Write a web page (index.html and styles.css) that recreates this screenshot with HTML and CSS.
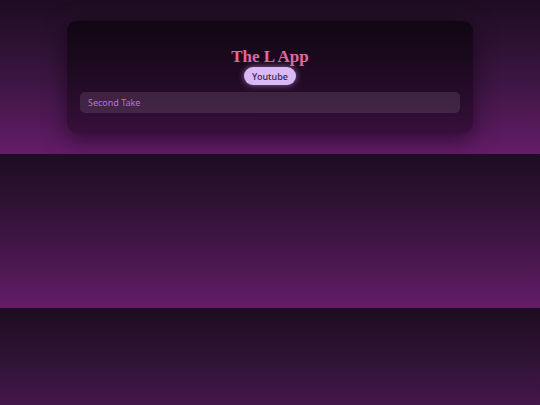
FILE: index.html
```html
<!DOCTYPE html>
<html>
<head>
<meta charset="utf-8">
<link rel="stylesheet" href="styles.css">
</head>
<body>
<div class="card">
  <h1 class="title">The L App</h1>
  <div class="tabs"><button class="pill">Youtube</button></div>
  <div class="field">Second Take</div>
</div>
</body>
</html>
```
FILE: styles.css
```css
body {
  margin: 0;
  background: linear-gradient(to bottom, #1d0d21 0%, #3a1540 50%, #641c68 100%);
  font-family: "Noto Sans", "Inter", sans-serif;
}
.card {
  width: 380px;
  margin: 21px auto;
  padding: 23px 13px 20px;
  border-radius: 9px;
  background: linear-gradient(to bottom, rgba(10, 4, 12, 0.75), rgba(30, 6, 32, 0.55));
  box-shadow: 0 6px 22px rgba(10, 0, 12, 0.55);
}
.title {
  margin: 0;
  text-align: center;
  font-family: "Liberation Serif", serif;
  font-weight: bold;
  font-size: 17px;
  line-height: 23px;
  padding-top: 1px;
  height: 22px;
  box-sizing: border-box;
  color: #e2679e;
}
.tabs {
  display: flex;
  justify-content: center;
  margin-top: 1px;
}
.pill {
  border: none;
  height: 18px;
  padding: 0 8px;
  border-radius: 9px;
  background: #dab9f6;
  color: #3a1c4c;
  font-family: "Noto Sans", sans-serif;
  font-size: 9px;
  font-weight: 500;
  box-shadow: 0 0 6px rgba(210, 160, 245, 0.6);
}
.field {
  margin-top: 7px;
  height: 21px;
  line-height: 21px;
  padding: 0 8px;
  border-radius: 5px;
  background: rgba(255, 255, 255, 0.1);
  color: #b673d8;
  font-size: 9px;
}
```
